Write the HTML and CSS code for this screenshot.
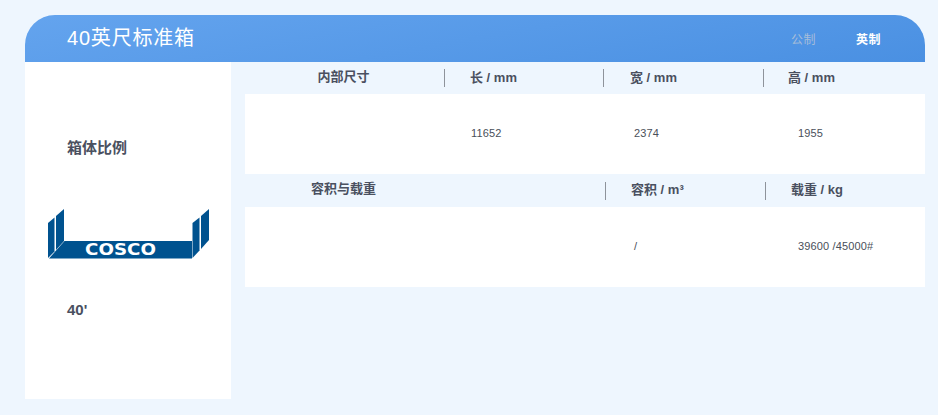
FILE: index.html
```html
<!DOCTYPE html>
<html lang="zh">
<head>
<meta charset="utf-8">
<title>40英尺标准箱</title>
<link rel="stylesheet" href="styles.css">
</head>
<body>
<main class="card">
  <header class="top">
    <h1 class="title">40英尺标准箱</h1>
    <div class="units">
      <span class="unit unit-off">公制</span>
      <span class="unit unit-on">英制</span>
    </div>
  </header>
  <div class="body">
    <aside class="side">
      <div class="side-label">箱体比例</div>
      <svg class="logo" width="164" height="52" viewBox="0 0 164 52" aria-label="COSCO">
        <path class="logo-fill" d="M1 50 V15 L7.500 9.500 V43.500 Z"/>
        <path class="logo-fill" d="M9 42 V8 L17 1 V33 Z"/>
        <path class="logo-fill" d="M145.500 50 V15 L152.500 9.500 V42.500 Z"/>
        <path class="logo-fill" d="M154 41 V8 L162 1 V32 Z"/>
        <path class="logo-fill" d="M17.500 33 H145 V50.500 H2 Z"/>
        <text class="logo-text" x="38" y="47" textLength="71" lengthAdjust="spacingAndGlyphs">COSCO</text>
      </svg>
      <div class="side-size">40'</div>
    </aside>
    <section class="specs">
      <div class="row head row-a">
        <div class="cell cell-title">内部尺寸</div>
        <div class="cell cell-rule">长 / mm</div>
        <div class="cell cell-rule">宽 / mm</div>
        <div class="cell cell-rule rule-tight">高 / mm</div>
      </div>
      <div class="row data row-a">
        <div class="cell"></div>
        <div class="val val-1">11652</div>
        <div class="val val-2">2374</div>
        <div class="val val-3">1955</div>
      </div>
      <div class="row head row-b">
        <div class="cell cell-title cell-title-wide">容积与载重</div>
        <div class="cell cell-rule">容积 / m³</div>
        <div class="cell cell-rule">载重 / kg</div>
      </div>
      <div class="row data row-b">
        <div class="cell"></div>
        <div class="val val-2b">/</div>
        <div class="val val-3b">39600 /45000#</div>
      </div>
    </section>
  </div>
</main>
</body>
</html>
```

FILE: styles.css
```css
* { box-sizing: border-box; }
html, body { margin: 0; height: 100%; }
body {
  background: #eef6fe;
  padding: 15px 13px 16px 25px;
  font-family: "Liberation Sans", Arial, "Noto Sans CJK SC", sans-serif;
  color: #4a5060;
  overflow: hidden;
}
.card { width: 900px; height: 384px; display: flex; flex-direction: column; }
.top {
  height: 47px;
  flex: none;
  border-radius: 30px 30px 0 0;
  background: linear-gradient(170deg, #64a4ee 0%, #4a90e2 100%);
  display: flex;
  align-items: center;
  justify-content: space-between;
  padding: 0 44px 5px 42px;
}
.title {
  margin: 0;
  font-size: 20px;
  font-weight: 400;
  color: #fff;
  letter-spacing: 0.8px;
}
.units { display: flex; gap: 40px; font-size: 12px; letter-spacing: 0.5px; padding-top: 5px; }
.unit-off { color: #a6bdd9; }
.unit-on { color: #fff; font-weight: 700; }
.body { flex: 1; display: flex; min-height: 0; }
.side {
  width: 206px;
  flex: none;
  background: #fff;
  display: flex;
  flex-direction: column;
  padding-top: 76px;
}
.side-label { margin-left: 42px; font-size: 15px; font-weight: 700; line-height: 20px; height: 20px; }
.logo { display: block; margin: 50px 0 0 22px; }
.logo-fill { fill: #00528f; }
.logo-text {
  fill: #fff;
  font-family: "DejaVu Sans", sans-serif;
  font-size: 15px;
  font-weight: 700;
}
.side-size { margin: 40px 0 0 42px; font-size: 15px; font-weight: 700; line-height: 20px; }
.specs { flex: 1; margin-left: 14px; min-width: 0; }
.row { display: grid; }
.row-a { grid-template-columns: 199px 159px 160px 1fr; }
.row-b { grid-template-columns: 360px 160px 1fr; }
.head { height: 32px; align-items: center; font-size: 13px; font-weight: 700; padding-bottom: 1px; }
.row-b.head { height: 33px; padding-bottom: 0; }
.data {
  height: 80px;
  background: #fff;
  align-items: center;
  font-size: 11px;
  letter-spacing: 0.15px;
  color: #4a4f5a;
  padding-bottom: 2px;
}
.cell-title { text-align: center; padding-right: 2px; line-height: 16px; height: 18px; }
.cell-title-wide { padding-right: 163px; line-height: 14px; }
.cell-rule {
  height: 18px;
  line-height: 18px;
  border-left: 1px solid #8e939b;
  padding-left: 26px;
}
.rule-tight { padding-left: 24px; }
.row-a .cell-rule:nth-child(2) { padding-left: 25px; }
.row-b .cell-rule { padding-left: 25px; line-height: 16px; }
.val-1 { padding-left: 27px; }
.val-2 { padding-left: 31px; }
.val-3 { padding-left: 35px; }
.val-2b { padding-left: 29px; }
.val-3b { padding-left: 33px; }
```
